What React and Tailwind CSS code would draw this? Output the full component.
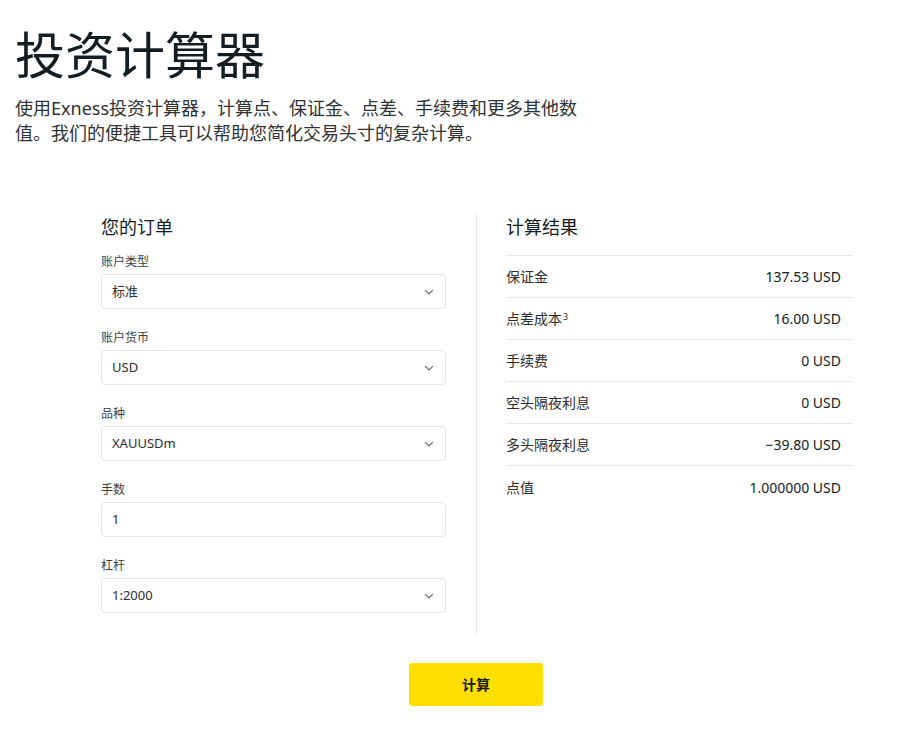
import React from 'react';

const font = { fontFamily: '"Noto Sans", "Noto Sans CJK SC", sans-serif' };

const Chevron = () => (
  <svg width="12" height="12" viewBox="0 0 12 12" fill="none" className="text-[#6b6e70]">
    <path d="M2.5 4.5 6 8l3.5-3.5" stroke="currentColor" strokeWidth="1.1" strokeLinecap="round" strokeLinejoin="round" />
  </svg>
);

const Field = ({ label, value, select = true }) => (
  <div className="flex flex-col">
    <div className="text-[12px] leading-[16px] text-[#3d3f41] mb-[4px]">{label}</div>
    <div className="h-[35px] rounded-[4px] border border-[#e4e5e6] bg-white flex items-center justify-between pl-[10px] pr-[10px]">
      <span className="text-[13px] text-[#2b2d2f]">{value}</span>
      {select && <Chevron />}
    </div>
  </div>
);

const rows = [
  ['保证金', '137.53 USD'],
  ['点差成本', '16.00 USD', true],
  ['手续费', '0 USD'],
  ['空头隔夜利息', '0 USD'],
  ['多头隔夜利息', '−39.80 USD'],
  ['点值', '1.000000 USD'],
];

export default function App() {
  return (
    <div className="bg-white min-h-[731px] text-[#141d22]" style={font}>
      <div className="pl-[15px] pt-[24px]">
        <h1 className="text-[50px] leading-[62px] font-normal text-[#141d22]">投资计算器</h1>
        <p className="w-[580px] mt-[10px] text-[18px] leading-[25px] text-[#2f3335]">
          使用Exness投资计算器，计算点、保证金、点差、手续费和更多其他数值。我们的便捷工具可以帮助您简化交易头寸的复杂计算。
        </p>
      </div>

      <div className="ml-[101px] mt-[68px] w-[751px] flex">
        <div className="w-[376px] pr-[30px] border-r border-[#e6e7e8] pb-[22px]">
          <h2 className="text-[18px] leading-[26px] text-[#141d22] mb-[14px]">您的订单</h2>
          <div className="flex flex-col gap-[21px]">
            <Field label="账户类型" value="标准" />
            <Field label="账户货币" value="USD" />
            <Field label="品种" value="XAUUSDm" />
            <Field label="手数" value="1" select={false} />
            <Field label="杠杆" value="1:2000" />
          </div>
        </div>
        <div className="flex-1 pl-[29px]">
          <h2 className="text-[18px] leading-[26px] text-[#141d22] pb-[15px] border-b border-[#e6e7e8]">计算结果</h2>
          {rows.map(([k, v, sup], i) => (
            <div
              key={k}
              className={
                'h-[42px] flex items-center justify-between pr-[11px] text-[14px] text-[#2b2d2f] ' +
                (i < rows.length - 1 ? 'border-b border-[#e6e7e8]' : '')
              }
            >
              <span>
                {k}
                {sup && <sup className="text-[9px] ml-[1px]">3</sup>}
              </span>
              <span className="text-[#141d22]">{v}</span>
            </div>
          ))}
        </div>
      </div>

      <div className="flex justify-center ml-[52px] mt-[28px]">
        <button className="w-[134px] h-[43px] rounded-[3px] bg-[#ffde02] text-[14px] font-bold text-[#141d22]">
          计算
        </button>
      </div>
    </div>
  );
}
